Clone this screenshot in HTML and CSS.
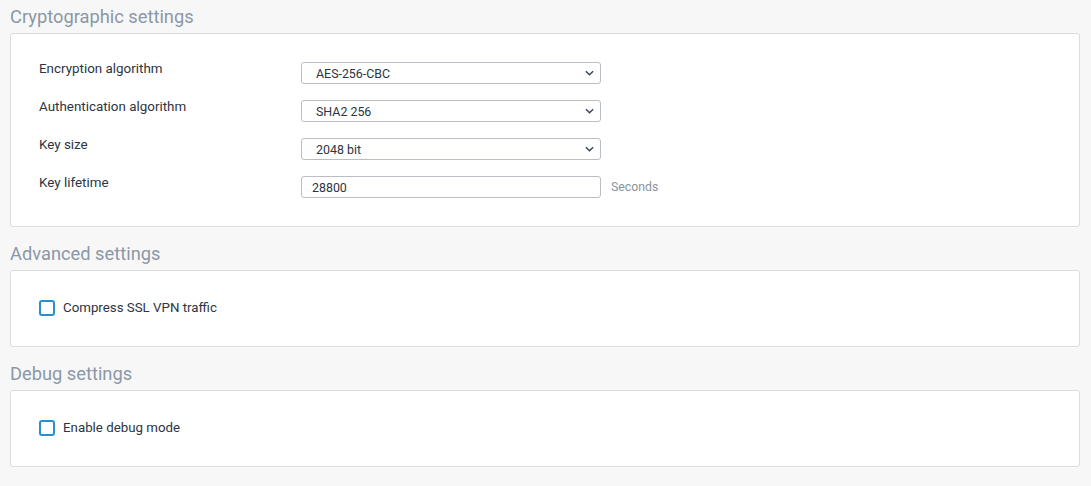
FILE: index.html
```html
<!DOCTYPE html>
<html>
<head>
<meta charset="utf-8">
<link rel="stylesheet" href="styles.css">
</head>
<body>
<div class="page">
  <section class="section">
    <h2 class="section-title">Cryptographic settings</h2>
    <div class="panel panel-form">
      <div class="row">
        <label class="label">Encryption algorithm</label>
        <div class="select"><span>AES-256-CBC</span><svg class="chev" viewBox="0 0 10 6" width="9" height="6"><path d="M1 1l4 4 4-4" fill="none" stroke="#3a4656" stroke-width="1.6"/></svg></div>
      </div>
      <div class="row">
        <label class="label">Authentication algorithm</label>
        <div class="select"><span>SHA2 256</span><svg class="chev" viewBox="0 0 10 6" width="9" height="6"><path d="M1 1l4 4 4-4" fill="none" stroke="#3a4656" stroke-width="1.6"/></svg></div>
      </div>
      <div class="row">
        <label class="label">Key size</label>
        <div class="select"><span>2048 bit</span><svg class="chev" viewBox="0 0 10 6" width="9" height="6"><path d="M1 1l4 4 4-4" fill="none" stroke="#3a4656" stroke-width="1.6"/></svg></div>
      </div>
      <div class="row">
        <label class="label">Key lifetime</label>
        <div class="input">28800</div>
        <span class="unit">Seconds</span>
      </div>
    </div>
  </section>
  <section class="section">
    <h2 class="section-title">Advanced settings</h2>
    <div class="panel panel-check">
      <label class="check"><span class="box"></span>Compress SSL VPN traffic</label>
    </div>
  </section>
  <section class="section">
    <h2 class="section-title">Debug settings</h2>
    <div class="panel panel-check">
      <label class="check"><span class="box"></span>Enable debug mode</label>
    </div>
  </section>
</div>
</body>
</html>
```
FILE: styles.css
```css
* { box-sizing: border-box; }
html, body { margin: 0; padding: 0; }
body {
  background: #f7f7f7;
  font-family: Roboto, "Liberation Sans", sans-serif;
  color: #2c3542;
  width: 1091px;
  height: 486px;
  overflow: hidden;
}
.page {
  padding: 0 11px 0 10px;
}
.section + .section { margin-top: 10px; }
.section-title {
  margin: 0;
  height: 33px;
  line-height: 33px;
  font-size: 18.3px;
  font-weight: 400;
  color: #8b97a7;
}
.panel {
  background: #fff;
  border: 1px solid #dcdcdc;
  border-radius: 3px;
}
.panel-form {
  padding: 28px 28px 28px 28px;
  display: flex;
  flex-direction: column;
  gap: 16px;
}
.row {
  display: flex;
  align-items: flex-start;
  height: 22px;
}
.label {
  width: 262px;
  font-size: 13.4px;
  line-height: 14px;
}
.select, .input {
  width: 300px;
  height: 22px;
  border: 1px solid #b9bec5;
  border-radius: 3px;
  font-size: 12.4px;
  display: flex;
  align-items: center;
  background: #fff;
}
.select { padding: 0 6px 0 14px; justify-content: space-between; }
.input { padding: 0 10px; }
.chev { display: block; }
.unit {
  margin-left: 10px;
  font-size: 12.3px;
  color: #8a94a0;
  line-height: 22px;
}
.panel-check {
  height: 77px;
  padding: 29px 28px 0;
  display: flex;
  align-items: flex-start;
}
.check {
  display: flex;
  align-items: center;
  font-size: 13.3px;
  line-height: 16px;
}
.box {
  width: 16px;
  height: 16px;
  border: 2px solid #2a8fd0;
  border-radius: 3px;
  margin-right: 8px;
  background: #fff;
}
```
